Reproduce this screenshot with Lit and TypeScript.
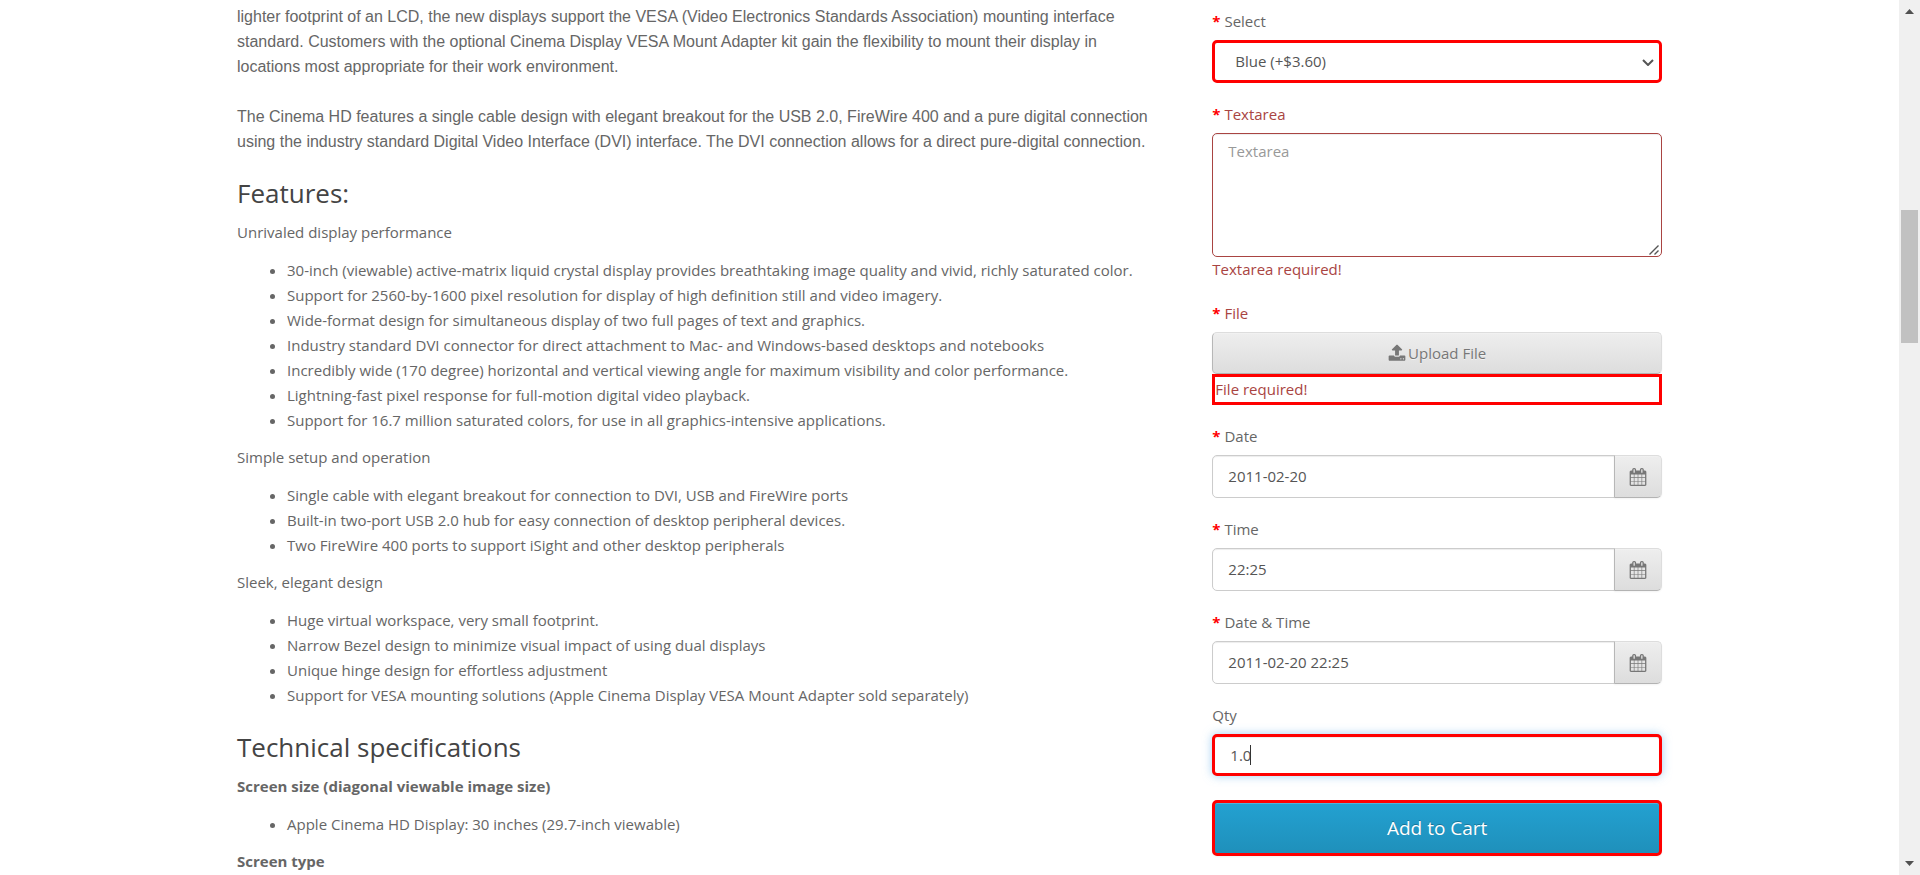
import { LitElement, html, css, svg } from "lit";
import { customElement, property } from "lit/decorators.js";

const uploadPath =
  "M1344 1472q0-26-19-45t-45-19-45 19-19 45 19 45 45 19 45-19 19-45zm256 0q0-26-19-45t-45-19-45 19-19 45 19 45 45 19 45-19 19-45zm128-224v320q0 40-28 68t-68 28h-1472q-40 0-68-28t-28-68v-320q0-40 28-68t68-28h427q21 56 70.5 92t110.5 36h256q61 0 110.5-36t70.5-92h427q40 0 68 28t28 68zm-325-648q-17 40-59 40h-256v448q0 26-19 45t-45 19h-256q-26 0-45-19t-19-45v-448h-256q-42 0-59-40-17-39 14-69l448-448q18-19 45-19t45 19l448 448q31 30 14 69z";
const calendarPath =
  "M192 1664h288v-288h-288v288zm352 0h320v-288h-320v288zm-352-352h288v-320h-288v320zm352 0h320v-320h-320v320zm-352-384h288v-288h-288v288zm736 736h320v-288h-320v288zm-384-736h320v-288h-320v288zm768 736h288v-288h-288v288zm-384-352h320v-320h-320v320zm-352-864v-288q0-13-9.5-22.5t-22.5-9.5h-64q-13 0-22.5 9.5t-9.5 22.5v288q0 13 9.5 22.5t22.5 9.5h64q13 0 22.5-9.5t9.5-22.5zm736 864h288v-320h-288v320zm-384-384h320v-288h-320v288zm384 0h288v-288h-288v288zm32-480v-288q0-13-9.5-22.5t-22.5-9.5h-64q-13 0-22.5 9.5t-9.5 22.5v288q0 13 9.5 22.5t22.5 9.5h64q13 0 22.5-9.5t9.5-22.5zm384-64v1280q0 52-38 90t-90 38h-1408q-52 0-90-38t-38-90v-1280q0-52 38-90t90-38h128v-96q0-66 47-113t113-47h64q66 0 113 47t47 113v96h384v-96q0-66 47-113t113-47h64q66 0 113 47t47 113v96h128q52 0 90 38t38 90z";

const icon = (path: string) => html`
  <svg class="icon" viewBox="0 0 1792 1792" aria-hidden="true">${svg`<path d=${path}></path>`}</svg>
`;

const features = [
  {
    title: "Unrivaled display performance",
    items: [
      "30-inch (viewable) active-matrix liquid crystal display provides breathtaking image quality and vivid, richly saturated color.",
      "Support for 2560-by-1600 pixel resolution for display of high definition still and video imagery.",
      "Wide-format design for simultaneous display of two full pages of text and graphics.",
      "Industry standard DVI connector for direct attachment to Mac- and Windows-based desktops and notebooks",
      "Incredibly wide (170 degree) horizontal and vertical viewing angle for maximum visibility and color performance.",
      "Lightning-fast pixel response for full-motion digital video playback.",
      "Support for 16.7 million saturated colors, for use in all graphics-intensive applications.",
    ],
  },
  {
    title: "Simple setup and operation",
    items: [
      "Single cable with elegant breakout for connection to DVI, USB and FireWire ports",
      "Built-in two-port USB 2.0 hub for easy connection of desktop peripheral devices.",
      "Two FireWire 400 ports to support iSight and other desktop peripherals",
    ],
  },
  {
    title: "Sleek, elegant design",
    items: [
      "Huge virtual workspace, very small footprint.",
      "Narrow Bezel design to minimize visual impact of using dual displays",
      "Unique hinge design for effortless adjustment",
      "Support for VESA mounting solutions (Apple Cinema Display VESA Mount Adapter sold separately)",
    ],
  },
];

@customElement("product-description")
class ProductDescription extends LitElement {
  static styles = css`
    :host {
      display: block;
      padding-top: 4px;
    }
    p {
      margin: 0 0 13px;
    }
    .intro {
      margin: 0 0 25px;
      padding-right: 16px;
      font-family: "Liberation Sans", Arial, sans-serif;
      font-size: 16px;
    }
    h3 {
      margin: 25px 0 12px;
      font-size: 26px;
      line-height: 29px;
      font-weight: 400;
      color: #444;
    }
    ul {
      margin: 0 0 12px;
      padding-left: 50px;
    }
  `;

  render() {
    return html`
      <p class="intro">
        lighter footprint of an LCD, the new displays support the VESA (Video Electronics Standards Association)
        mounting interface standard. Customers with the optional Cinema Display VESA Mount Adapter kit gain the
        flexibility to mount their display in locations most appropriate for their work environment.
      </p>
      <p class="intro">
        The Cinema HD features a single cable design with elegant breakout for the USB 2.0, FireWire 400 and a pure
        digital connection using the industry standard Digital Video Interface (DVI) interface. The DVI connection
        allows for a direct pure-digital connection.
      </p>
      <h3>Features:</h3>
      ${features.map(
        (group) => html`
          <p>${group.title}</p>
          <ul>
            ${group.items.map((item) => html`<li>${item}</li>`)}
          </ul>
        `,
      )}
      <h3>Technical specifications</h3>
      <p><b>Screen size (diagonal viewable image size)</b></p>
      <ul>
        <li>Apple Cinema HD Display: 30 inches (29.7-inch viewable)</li>
      </ul>
      <p><b>Screen type</b></p>
    `;
  }
}

@customElement("product-options")
class ProductOptions extends LitElement {
  static styles = css`
    :host {
      display: block;
      padding-top: 9px;
    }
    .group {
      margin-bottom: 19px;
    }
    .group.last {
      margin-bottom: 24px;
    }
    label {
      display: block;
      margin-bottom: 6px;
    }
    .required > label::before {
      content: "* ";
      color: #f00;
      font-weight: 700;
    }
    .error > label,
    .message {
      color: #a94442;
    }
    .boxed {
      border: 3px solid #f00;
    }
    .control {
      display: block;
      box-sizing: border-box;
      width: 100%;
      height: 43px;
      margin: 0;
      padding: 5px 15px 7px;
      border: 1px solid #ccc;
      border-radius: 5px;
      outline: none;
      background: #fff;
      box-shadow: inset 0 1px 1px rgba(0, 0, 0, 0.075);
      font: inherit;
      color: #555;
    }
    .control::placeholder {
      color: #999;
      opacity: 1;
    }
    .control.marked {
      padding: 5px 15px;
      border: 3px solid #f00;
    }
    .wrap {
      position: relative;
    }
    select.control.marked {
      appearance: none;
      padding: 0 20px;
      box-shadow: none;
    }
    .chevron {
      position: absolute;
      top: 19px;
      right: 8px;
      width: 12px;
      height: 7px;
      fill: none;
      stroke: #555;
      stroke-width: 2;
      pointer-events: none;
    }
    textarea.control {
      height: 124px;
      border-color: #a94442;
      resize: none;
    }
    .grip {
      position: absolute;
      right: 3px;
      bottom: 2px;
      width: 10px;
      height: 10px;
      fill: none;
      stroke: #555;
      pointer-events: none;
    }
    .pair {
      display: flex;
    }
    .pair .control {
      flex: 1;
      min-width: 0;
      border-radius: 5px 0 0 5px;
    }
    .btn {
      display: flex;
      align-items: center;
      justify-content: center;
      box-sizing: border-box;
      margin: 0;
      padding: 0 14px;
      border: 1px solid;
      border-color: #ddd #ddd #b3b3b3 #b7b7b7;
      border-radius: 5px;
      background: linear-gradient(#eee, #ddd);
      box-shadow: inset 0 1px 0 rgba(255, 255, 255, 0.2), 0 1px 2px rgba(0, 0, 0, 0.05);
      font: inherit;
      color: #777;
      text-shadow: 0 1px 0 rgba(255, 255, 255, 0.5);
      cursor: pointer;
    }
    .pair .btn {
      width: 48px;
      margin-left: -1px;
      border-radius: 0 5px 5px 0;
    }
    .upload {
      width: 100%;
      height: 42px;
      gap: 2px;
    }
    .icon {
      flex: none;
      width: 18px;
      height: 18px;
      fill: currentColor;
    }
    .qty {
      height: 42px;
      box-shadow: inset 0 1px 1px rgba(0, 0, 0, 0.075), 0 0 10px rgba(102, 175, 233, 0.6);
    }
    .caret {
      position: absolute;
      top: 11px;
      left: 38px;
      width: 1px;
      height: 20px;
      background: #333;
    }
    .cart {
      width: 100%;
      height: 56px;
      border: 3px solid #f00;
      background: linear-gradient(#23a1d1, #1f90bb);
      font-size: 19px;
      color: #fff;
      text-shadow: 0 -1px 0 rgba(0, 0, 0, 0.25);
    }
  `;

  private picker(id: string, label: string, value: string) {
    return html`
      <div class="group required">
        <label for=${id}>${label}</label>
        <div class="pair">
          <input class="control" id=${id} type="text" .value=${value} />
          <button class="btn" type="button" aria-label="Pick ${label}">${icon(calendarPath)}</button>
        </div>
      </div>
    `;
  }

  render() {
    return html`
      <div class="group required">
        <label for="colour">Select</label>
        <div class="wrap">
          <select class="control marked" id="colour">
            <option>Blue (+$3.60)</option>
          </select>
          <svg class="chevron" viewBox="0 0 12 7" aria-hidden="true"><path d="M1 1l5 5 5-5"></path></svg>
        </div>
      </div>
      <div class="group required error">
        <label for="notes">Textarea</label>
        <div class="wrap">
          <textarea class="control" id="notes" placeholder="Textarea"></textarea>
          <svg class="grip" viewBox="0 0 10 10" aria-hidden="true">
            <path stroke-width="1.400" d="M0.500 9.500L9.500 0.500M5.500 9.500L9.500 5.500"></path>
          </svg>
        </div>
        <div class="message">Textarea required!</div>
      </div>
      <div class="group required error">
        <label for="upload">File</label>
        <button class="btn upload" id="upload" type="button">${icon(uploadPath)}<span>Upload File</span></button>
        <div class="message boxed">File required!</div>
      </div>
      ${this.picker("date", "Date", "2011-02-20")} ${this.picker("time", "Time", "22:25")}
      ${this.picker("datetime", "Date & Time", "2011-02-20 22:25")}
      <div class="group last">
        <label for="qty">Qty</label>
        <div class="wrap">
          <input class="control marked qty" id="qty" type="text" .value=${"1.0"} />
          <span class="caret"></span>
        </div>
      </div>
      <button class="btn cart" type="button">Add to Cart</button>
    `;
  }
}

@customElement("scroll-track")
class ScrollTrack extends LitElement {
  @property({ type: Number }) start = 0;
  @property({ type: Number }) size = 0;

  static styles = css`
    :host {
      display: flex;
      flex-direction: column;
      align-items: center;
      box-sizing: border-box;
      padding: 9px 2px;
      background: #f0f0f0;
    }
    .arrow {
      flex: none;
      width: 9px;
      height: 5px;
      fill: #505050;
    }
    .rail {
      flex: 1;
      align-self: stretch;
      margin: 8px 0;
    }
    .thumb {
      background: #c1c1c1;
    }
  `;

  render() {
    return html`
      <svg class="arrow" viewBox="0 0 9 5"><path d="M0 5L4.500 0L9 5z"></path></svg>
      <div class="rail">
        <div style="height:${this.start}%"></div>
        <div class="thumb" style="height:${this.size}%"></div>
      </div>
      <svg class="arrow" viewBox="0 0 9 5"><path d="M0 0L4.500 5L9 0z"></path></svg>
    `;
  }
}

@customElement("app-root")
class AppRoot extends LitElement {
  static styles = css`
    :host {
      display: flex;
      height: 100vh;
      overflow: hidden;
      background: #fff;
      font-family: "Open Sans", sans-serif;
      font-size: 15px;
      line-height: 25px;
      color: #666;
    }
    main {
      flex: 1;
      min-width: 0;
      overflow: hidden;
    }
    .container {
      display: grid;
      grid-template-columns: 2fr 1fr;
      max-width: 1463px;
      margin: 0 auto;
    }
    .column {
      min-width: 0;
      padding: 0 19px;
    }
    scroll-track {
      flex: none;
      width: 21px;
    }
  `;

  render() {
    return html`
      <main>
        <div class="container">
          <div class="column"><product-description></product-description></div>
          <div class="column"><product-options></product-options></div>
        </div>
      </main>
      <scroll-track .start=${22.6} .size=${16}></scroll-track>
    `;
  }
}
